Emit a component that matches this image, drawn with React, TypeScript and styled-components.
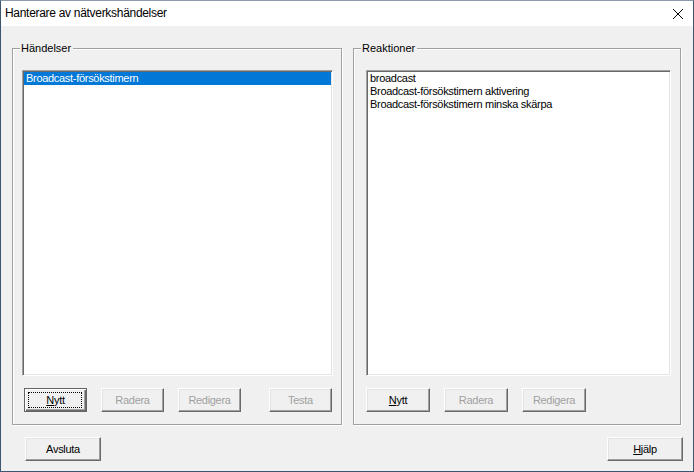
import React from 'react';
import styled, {createGlobalStyle, css} from "styled-components";

const GlobalStyle = createGlobalStyle`
  html, body {
    margin: 0;
    padding: 0;
    background: #f0f0f0;
  }
  * {
    box-sizing: border-box;
  }
`;

const Window = styled.div`
  width: 694px;
  height: 472px;
  border: 1px solid #3d5670;
  border-top-color: #8c9bab;
  background: #f0f0f0;
  display: flex;
  flex-direction: column;
  font-family: "Liberation Sans", Arial, sans-serif;
  font-size: 11px;
  color: #000;
`;

const TitleBar = styled.div`
  height: 25px;
  background: #fff;
  display: flex;
  align-items: center;
  justify-content: space-between;
  padding: 0 9px 0 4px;
`;

const Title = styled.span`
  font-family: "Liberation Sans", Arial, sans-serif;
  font-size: 12px;
  letter-spacing: -0.3px;
  padding-bottom: 1px;
`;

const CloseBtn = styled.div`
  width: 12px;
  height: 12px;
  display: flex;
  margin-top: 1px;
`;

const Body = styled.div`
  flex: 1;
  display: flex;
  flex-direction: column;
  padding: 22px 12px 10px 11px;
`;

const Groups = styled.div`
  display: flex;
  gap: 11px;
`;

const GroupBox = styled.div<{ w: number; padLeft: number; padRight: number }>`
  position: relative;
  width: ${p => p.w}px;
  border: 1px solid #a0a0a0;
  box-shadow: 1px 1px 0 #fff, inset 1px 1px 0 #fff;
  padding: 21px ${p => p.padRight}px 12px ${p => p.padLeft}px;
  display: flex;
  flex-direction: column;
`;

const Legend = styled.span`
  position: absolute;
  top: -8px;
  left: 7px;
  padding: 0 2px 0 1px;
  background: #f0f0f0;
  line-height: 14px;
`;

const ListBox = styled.div`
  height: 306px;
  background: #fff;
  border: 1px solid;
  border-color: #a0a0a0 #fff #fff #a0a0a0;
  box-shadow: inset 1px 1px 0 #696969, inset -1px -1px 0 #e3e3e3;
  padding: 1px;
  display: flex;
  flex-direction: column;
`;

const Item = styled.div<{ selected?: boolean }>`
  height: 13px;
  line-height: 13px;
  padding-left: 2px;
  white-space: nowrap;
  letter-spacing: -0.3px;
  ${p => p.selected && css`
    background: #0078d7;
    color: #fff;
  `}
`;

const ButtonRow = styled.div<{ padLeft: number; padRight?: number }>`
  display: flex;
  gap: 14px;
  margin-top: 12px;
  padding-left: ${p => p.padLeft}px;
  padding-right: ${p => p.padRight ?? 0}px;
`;

const Spacer = styled.div`
  flex: 1;
`;

const Button = styled.div<{ w?: number; disabled?: boolean; isDefault?: boolean }>`
  position: relative;
  width: ${p => p.w ?? 64}px;
  height: 24px;
  display: flex;
  align-items: center;
  justify-content: center;
  background: #f0f0f0;
  border: 1px solid;
  border-color: #fff #696969 #696969 #fff;
  box-shadow: inset -1px -1px 0 #a0a0a0, inset 1px 1px 0 #e3e3e3;
  color: ${p => p.disabled ? "#a0a0a0" : "#000"};
  letter-spacing: -0.3px;
  padding-bottom: 1px;
  ${p => p.isDefault && css`
    border-color: #646464;
    box-shadow: inset 1px 1px 0 #fff, inset -1px -1px 0 #696969, inset -2px -2px 0 #a0a0a0;
  `}
`;

const FocusRing = styled.div`
  position: absolute;
  inset: 3px 4px 3px 3px;
  border: 1px dotted #000;
`;

const Footer = styled.div`
  display: flex;
  justify-content: space-between;
  margin: 12px -2px 0 0;
  padding-left: 13px;
`;

function App() {
    return (
        <>
            <GlobalStyle/>
            <Window>
                <TitleBar>
                    <Title>Hanterare av nätverkshändelser</Title>
                    <CloseBtn>
                        <svg width="12" height="12" viewBox="0 0 12 12">
                            <path d="M1 1 L11 11 M11 1 L1 11" stroke="#000" strokeWidth="1" fill="none"/>
                        </svg>
                    </CloseBtn>
                </TitleBar>
                <Body>
                    <Groups>
                        <GroupBox w={330} padLeft={9} padRight={8}>
                            <Legend>Händelser</Legend>
                            <ListBox>
                                <Item selected>Broadcast-försökstimern</Item>
                            </ListBox>
                            <ButtonRow padLeft={2} padRight={1}>
                                <Button isDefault>
                                    <FocusRing/>
                                    <span><u>N</u>ytt</span>
                                </Button>
                                <Button disabled>Radera</Button>
                                <Button disabled>Redigera</Button>
                                <Spacer/>
                                <Button disabled>Testa</Button>
                            </ButtonRow>
                        </GroupBox>
                        <GroupBox w={328} padLeft={12} padRight={9}>
                            <Legend>Reaktioner</Legend>
                            <ListBox>
                                <Item>broadcast</Item>
                                <Item>Broadcast-försökstimern aktivering</Item>
                                <Item>Broadcast-försökstimern minska skärpa</Item>
                            </ListBox>
                            <ButtonRow padLeft={0}>
                                <Button><span><u>N</u>ytt</span></Button>
                                <Button disabled>Radera</Button>
                                <Button disabled>Redigera</Button>
                            </ButtonRow>
                        </GroupBox>
                    </Groups>
                    <Footer>
                        <Button w={76}>Avsluta</Button>
                        <Button w={76}><span><u>H</u>jälp</span></Button>
                    </Footer>
                </Body>
            </Window>
        </>
    );
}

export default App;
